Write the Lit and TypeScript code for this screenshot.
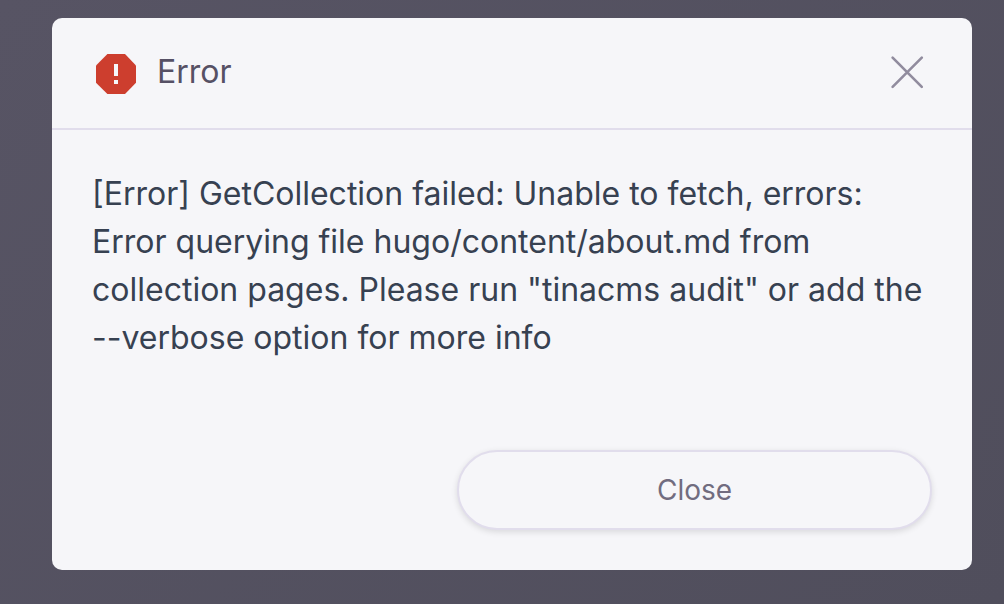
import { LitElement, html, css } from "lit";
import { customElement, state } from "lit/decorators.js";

@customElement("app-root")
export class AppRoot extends LitElement {
  static styles = css`
    :host {
      display: block;
      box-sizing: border-box;
      min-height: 100vh;
      padding: 18px 32px 34px 52px;
      background: linear-gradient(135deg, #575464, #504e5c);
      font-family: Inter, "Liberation Sans", sans-serif;
    }
    .modal {
      border-radius: 10px;
      background: #f6f6f9;
      overflow: hidden;
    }
    .header {
      display: flex;
      align-items: flex-start;
      gap: 21px;
      box-sizing: border-box;
      height: 112px;
      padding: 34px 45px 34px 44px;
      border-bottom: 2px solid #e1ddec;
    }
    .alert {
      width: 40px;
      height: 40px;
      margin-top: 2px;
    }
    .title {
      flex: 1;
      margin: 0;
      font-size: 32px;
      line-height: 40px;
      font-weight: 400;
      color: #565165;
    }
    .dismiss {
      display: flex;
      padding: 0;
      border: 0;
      background: none;
      cursor: pointer;
    }
    .cross {
      width: 40px;
      height: 40px;
    }
    .message {
      margin: 0;
      padding: 40px 40px 88px;
      font-size: 32px;
      line-height: 48px;
      color: #374151;
    }
    .actions {
      display: grid;
      grid-template-columns: 10fr 13fr;
      padding: 0 40px 40px;
    }
    .close {
      grid-column: 2;
      height: 80px;
      border: 2px solid #e1ddec;
      border-radius: 40px;
      background: #f6f6f9;
      box-shadow: 0 2px 6px rgba(0, 0, 0, 0.12);
      font: inherit;
      font-size: 28px;
      color: #716c7f;
      cursor: pointer;
    }
  `;

  @state() private open = true;

  private dismiss() {
    this.open = false;
  }

  render() {
    if (!this.open) return html``;
    return html`
      <section class="modal" role="dialog" aria-labelledby="title">
        <header class="header">
          <svg class="alert" viewBox="0 0 40 40" aria-hidden="true">
            <path fill="#cd3e2e" d="M11.4 0h17.6L40 11.4V28.8L29 40H11.4L0 28.8V11.4z" />
            <path fill="#f6f6f9" d="M18 10h4v12h-4zM18 26h4v4h-4z" />
          </svg>
          <h1 class="title" id="title">Error</h1>
          <button class="dismiss" aria-label="Dismiss" @click=${this.dismiss}>
            <svg class="cross" viewBox="0 0 40 40" aria-hidden="true">
              <path
                fill="none"
                stroke="#918c9e"
                stroke-width="2.6"
                stroke-linecap="round"
                d="M5.6 5.6l29.2 29.2M34.8 5.6L5.6 34.8"
              />
            </svg>
          </button>
        </header>
        <p class="message">
          [Error] GetCollection failed: Unable to fetch, errors: Error querying file
          hugo/content/about.md from collection pages. Please run "tinacms audit" or add the
          --verbose option for more info
        </p>
        <div class="actions">
          <button class="close" @click=${this.dismiss}>Close</button>
        </div>
      </section>
    `;
  }
}
